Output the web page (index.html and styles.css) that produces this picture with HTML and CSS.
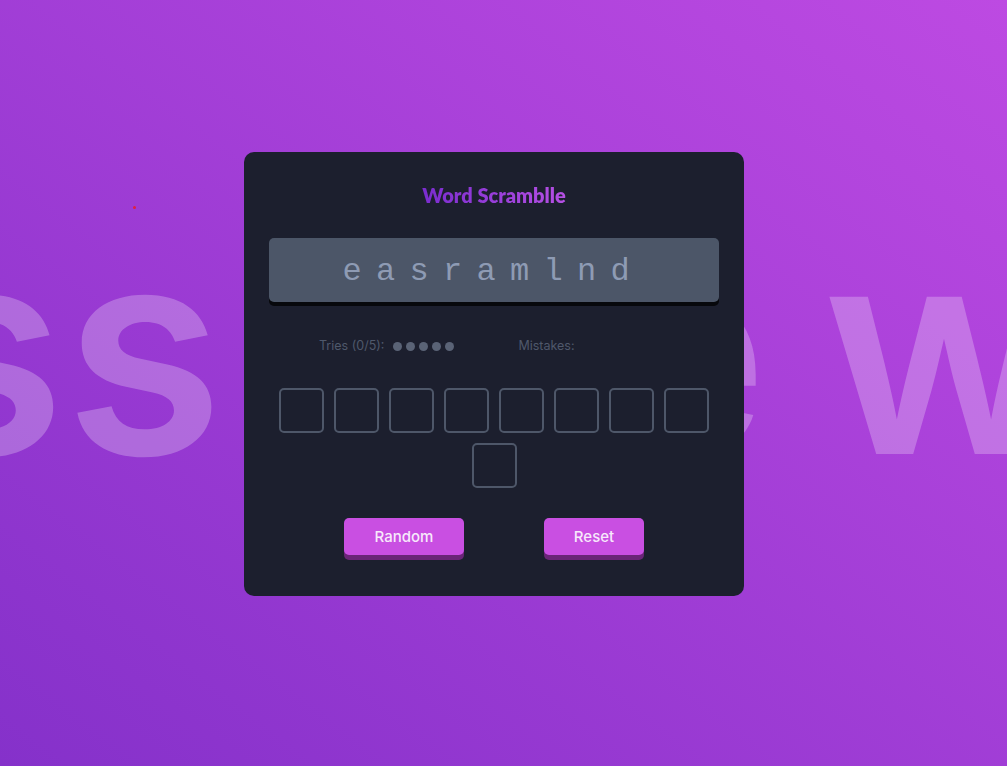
FILE: index.html
```html
<!DOCTYPE html>
<html lang="en">
<head>
<meta charset="utf-8">
<title>Word Scramblle</title>
<link rel="stylesheet" href="styles.css">
</head>
<body>
<div class="backdrop-text" aria-hidden="true">guess <span class="mid">the</span> word</div>
<span class="dot-marker" aria-hidden="true"></span>
<main class="stage">
  <section class="card">
    <h1 class="title">Word Scramblle</h1>
    <div class="scrambled">
      <span>e</span><span>a</span><span>s</span><span>r</span><span>a</span><span>m</span><span>l</span><span>n</span><span>d</span>
    </div>
    <div class="stats">
      <div class="tries">
        <span class="label">Tries (0/5):</span>
        <span class="dots"><i></i><i></i><i></i><i></i><i></i></span>
      </div>
      <div class="mistakes">
        <span class="label">Mistakes:</span>
      </div>
    </div>
    <div class="slots">
      <span class="slot"></span><span class="slot"></span><span class="slot"></span><span class="slot"></span><span class="slot"></span><span class="slot"></span><span class="slot"></span><span class="slot"></span><span class="slot"></span>
    </div>
    <div class="actions">
      <button class="btn btn-random">Random</button>
      <button class="btn btn-reset">Reset</button>
    </div>
  </section>
</main>
</body>
</html>
```

FILE: styles.css
```css
* { box-sizing: border-box; }

html, body {
  margin: 0;
  height: 100%;
}

body {
  position: relative;
  overflow: hidden;
  background: linear-gradient(to top right, #8531ca 0%, #bd4ae2 100%);
  font-family: Inter, "Noto Sans", sans-serif;
}

.backdrop-text {
  position: absolute;
  left: -620px;
  top: 205px;
  font-family: Inter, sans-serif;
  font-weight: 600;
  font-size: 288px;
  line-height: 1;
  white-space: nowrap;
  color: rgba(255, 255, 255, 0.25);
  pointer-events: none;
}

.backdrop-text .mid {
  margin-left: 23px;
  margin-right: -17px;
}

.dot-marker {
  position: absolute;
  left: 133px;
  top: 206px;
  width: 3px;
  height: 3px;
  border-radius: 50%;
  background: #e2203c;
}

.stage {
  position: relative;
  height: 100%;
  display: flex;
  align-items: center;
  justify-content: center;
  padding: 0 19px 18px 0;
}

.card {
  width: 500px;
  background: #1c1f2e;
  border-radius: 10px;
  padding: 31px 25px 41px;
}

.title {
  text-align: center;
  font-family: Lato, sans-serif;
  font-weight: 800;
  font-size: 20px;
  line-height: 24px;
  background: linear-gradient(to right, #7a2ccf, #b650e4);
  -webkit-background-clip: text;
  background-clip: text;
  color: transparent;
  display: table;
  margin: 0 auto;
}

.scrambled {
  margin-top: 31px;
  height: 64px;
  background: #4c5668;
  border-radius: 5px;
  box-shadow: 0 4px 0 #07080c;
  display: flex;
  justify-content: center;
  align-items: center;
  padding: 3px 16px 0 0;
  font-family: "Liberation Mono", monospace;
  font-size: 32px;
  color: #8e9bb4;
}

.scrambled span {
  width: 33.5px;
  text-align: center;
}

.stats {
  margin-top: 36px;
  display: flex;
  align-items: center;
  padding-left: 50px;
  gap: 64px;
  font-size: 12.5px;
  line-height: 16px;
  color: #4f586b;
}

.tries {
  display: flex;
  align-items: center;
  gap: 9px;
}

.dots {
  display: flex;
  gap: 4px;
}

.dots i {
  width: 9px;
  height: 9px;
  border-radius: 50%;
  background: #5a6376;
}

.slots {
  margin-top: 34px;
  display: flex;
  flex-wrap: wrap;
  justify-content: center;
  gap: 10px;
}

.slot {
  width: 45px;
  height: 45px;
  border: 2px solid #4e5769;
  border-radius: 5px;
}

.actions {
  margin-top: 30px;
  display: flex;
  justify-content: center;
  gap: 80px;
}

.btn {
  height: 37px;
  border: 0;
  border-radius: 5px;
  background: #c94fe2;
  box-shadow: 0 5px 0 #6a2577;
  color: #f7e9fb;
  font-family: Inter, sans-serif;
  font-weight: 500;
  font-size: 15px;
  padding: 0;
  cursor: pointer;
}

.btn-random { width: 120px; }
.btn-reset { width: 100px; }
```
